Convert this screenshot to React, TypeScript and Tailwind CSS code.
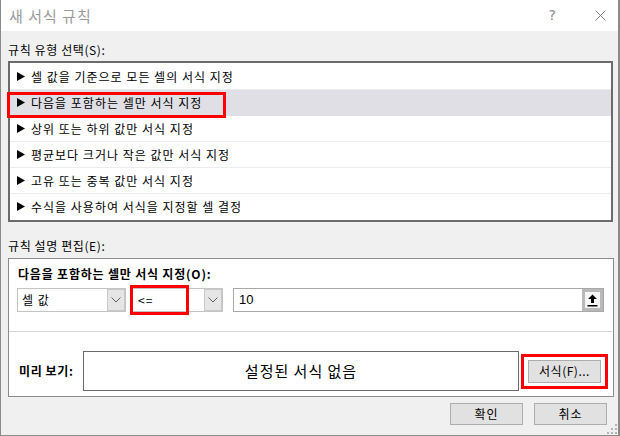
import React from 'react';

const rules = [
  '셀 값을 기준으로 모든 셀의 서식 지정',
  '다음을 포함하는 셀만 서식 지정',
  '상위 또는 하위 값만 서식 지정',
  '평균보다 크거나 작은 값만 서식 지정',
  '고유 또는 중복 값만 서식 지정',
  '수식을 사용하여 서식을 지정할 셀 결정',
];

function Triangle() {
  return (
    <svg width="8" height="9" viewBox="0 0 8 9" className="shrink-0">
      <path d="M0 0 L8 4.5 L0 9 Z" fill="#000" />
    </svg>
  );
}

function Chevron() {
  return (
    <svg width="10" height="6" viewBox="0 0 10 6">
      <path d="M0.5 0.5 L5 5 L9.5 0.5" fill="none" stroke="#606060" strokeWidth="1" />
    </svg>
  );
}

function DropButton() {
  return (
    <div className="w-[18px] h-[22px] bg-[#e5e5e5] border border-[#c8c8c8] flex items-center justify-center">
      <Chevron />
    </div>
  );
}

function App() {
  return (
    <div className="w-[620px] h-[436px] bg-[#f0f0f0] border-l border-r-2 border-b border-[#8a8a8a] relative overflow-hidden text-[12px] text-black font-['Noto_Sans_CJK_KR',sans-serif]">
      {/* title bar */}
      <div className="h-[31px] bg-white flex items-center pl-[8px] pr-[12px]">
        <span className="text-[15px] text-[#9a9a9a] leading-[20px] tracking-[1px]">새 서식 규칙</span>
        <span className="ml-auto text-[14px] text-[#8a8a8a] font-['DejaVu_Sans',sans-serif] mr-[39px]">?</span>
        <svg width="11" height="11" viewBox="0 0 11 11">
          <path d="M0.5 0.5 L10.5 10.5 M10.5 0.5 L0.5 10.5" stroke="#808080" strokeWidth="1" />
        </svg>
      </div>

      <div className="px-[7px]">
        <div className="mt-[11px] leading-[16px] tracking-[0.6px]">규칙 유형 선택(S):</div>

        {/* rule list */}
        <div className="mt-[3px] w-[605px] h-[161px] border-2 border-[#6b6b6b] bg-white pt-[1px]">
          {rules.map((r, i) => (
            <div
              key={r}
              className={
                'relative h-[26px] flex items-center gap-[6px] pl-[7px] border-b ' +
                (i === 1 ? 'bg-[#dfdfe5] border-[#dfdfe5]' : 'border-[#ececec]') +
                (i === 5 ? ' border-transparent' : '')
              }
            >
              <Triangle />
              <span className="leading-[16px] tracking-[1px]">{r}</span>
              {i === 1 && (
                <div className="absolute left-[-3px] top-[2px] w-[219px] h-[26px] border-[3px] border-[#ff0000]" />
              )}
            </div>
          ))}
        </div>

        <div className="mt-[16px] leading-[16px] tracking-[0.6px]">규칙 설명 편집(E):</div>

        {/* description box */}
        <div className="mt-[4px] w-[606px] h-[139px] border border-[#8c8c8c] bg-white">
          <div className="pt-[7px] pl-[9px] leading-[16px] font-bold tracking-[0.8px]">다음을 포함하는 셀만 서식 지정(O):</div>

          <div className="mt-[6px] pl-[8px] flex items-center h-[24px]">
            <div className="w-[109px] h-[24px] border border-[#c4c4c4] flex items-center">
              <span className="pl-[4px] flex-1 tracking-[1px]">셀 값</span>
              <DropButton />
            </div>
            <div className="ml-[5px] w-[92px] h-[24px] border border-[#c4c4c4] flex items-center relative">
              <span className="pl-[6px] flex-1 tracking-[1px]">&lt;=</span>
              <DropButton />
              <div className="absolute left-[-2px] top-[-4px] w-[59px] h-[30px] border-[3px] border-[#ff0000]" />
            </div>
            <div className="ml-[10px] w-[371px] h-[24px] border border-[#a9a9a9] flex items-center">
              <span className="pl-[5px] flex-1 text-[13px] font-['Liberation_Sans',sans-serif]">10</span>
              <div className="w-[21px] h-[22px] border-[3px] border-[#b9b9b9] bg-[#f6f6f6] flex items-center justify-center">
                <svg width="11" height="13" viewBox="0 0 11 13">
                  <path d="M5.5 0.5 L10 5 L7 5 L7 9 L4 9 L4 5 L1 5 Z" fill="#000" />
                  <rect x="0.5" y="11" width="10" height="1.5" fill="#000" />
                </svg>
              </div>
            </div>
          </div>

          <div className="mt-[19px] border-t border-[#d4d4d4] mr-[1px]" />

          <div className="mt-[19px] flex items-center">
            <span className="pl-[10px] w-[74px] font-bold leading-[16px] tracking-[0.6px]">미리 보기:</span>
            <div className="w-[436px] h-[40px] border border-[#6a6a6a] flex items-center justify-center text-[15px] tracking-[1px]">
              설정된 서식 없음
            </div>
            <div className="ml-[2px] w-[87px] h-[35px] border-[3px] border-[#ff0000] flex items-center justify-center">
              <div className="w-[73px] h-[23px] bg-[#e1e1e1] border border-[#adadad] flex items-center justify-center leading-[16px] tracking-[0.5px]">
                서식(F)...
              </div>
            </div>
          </div>
        </div>

        {/* footer buttons */}
        <div className="mt-[6px] flex justify-end gap-[11px] pr-[4px]">
          <div className="w-[73px] h-[22px] bg-[#e1e1e1] border border-[#adadad] flex items-center justify-center leading-[16px] tracking-[1px]">확인</div>
          <div className="w-[73px] h-[22px] bg-[#e1e1e1] border border-[#adadad] flex items-center justify-center leading-[16px] tracking-[1px]">취소</div>
        </div>
      </div>

      {/* resize grip */}
      <svg className="absolute right-[1px] bottom-[1px]" width="10" height="10" viewBox="0 0 10 10">
        {[[8, 0], [8, 4], [4, 4], [8, 8], [4, 8], [0, 8]].map(([x, y]) => (
          <rect key={x + '-' + y} x={x} y={y} width="2" height="2" fill="#b4b4b4" />
        ))}
      </svg>
    </div>
  );
}

export default App;
